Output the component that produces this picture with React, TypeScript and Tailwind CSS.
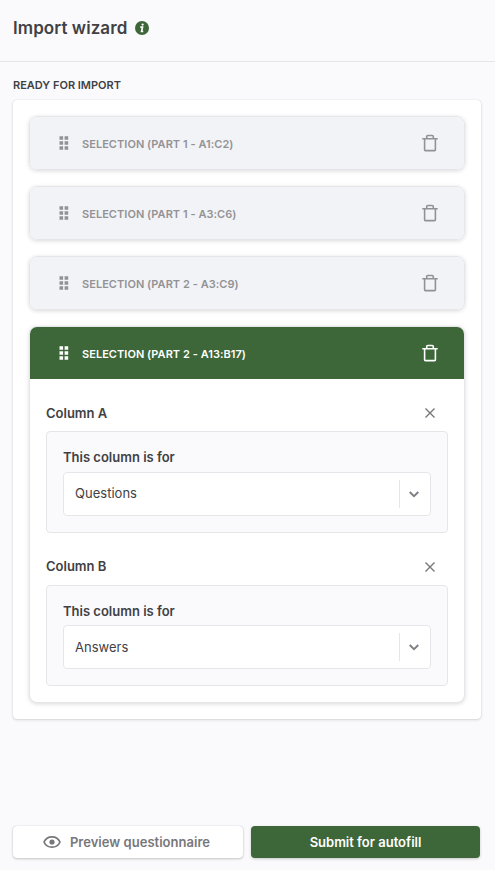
import React from "react";

function Grip() {
  return (
    <svg width="10" height="14" viewBox="0 0 10 14" fill="currentColor">
      <path d="M.5.2h3.6v3.6H.5zM5.600.2h3.600v3.600H5.600zM.5 5.200h3.600v3.600H.5zM5.600 5.200h3.600v3.600H5.600zM.5 10.200h3.600v3.600H.5zM5.600 10.200h3.600v3.600H5.600z" />
    </svg>
  );
}

function Trash() {
  return (
    <svg width="16" height="18" viewBox="0 0 16 18" fill="none" stroke="currentColor" strokeWidth="1.6">
      <path d="M.3 4.8h15.400M2.600 4.800v11q0 .8.800.8h9.200q.8 0 .8-.8v-11M4.700 4.800V2.600q0-1.100 1.100-1.100h4.400q1.100 0 1.100 1.100v2.200" />
    </svg>
  );
}

function Header({ label, active = false }: { label: string; active?: boolean }) {
  return (
    <div
      className={`flex h-[52px] items-center pl-[29px] pr-[26px] ${
        active ? "bg-[#3d6639] text-white" : "bg-[#f2f3f7] text-[#929294]"
      }`}
    >
      <Grip />
      <span className="ml-[13px] mt-[2px] flex-1 text-[11px] leading-4 font-semibold tracking-[0.04px]">{label}</span>
      <Trash />
    </div>
  );
}

function Column({ name, value, second = false }: { name: string; value: string; second?: boolean }) {
  return (
    <section>
      <div className={`flex h-5 items-center justify-between pr-3 ${second ? "mb-[9px]" : "mb-2"}`}>
        <h2 className="text-[13px] leading-5 font-semibold">{name}</h2>
        <svg
          className={second ? "mt-[2px]" : ""}
          width="12"
          height="12"
          viewBox="0 0 12 12"
          fill="none"
          stroke="#77777a"
          strokeWidth="1.4"
        >
          <path d="m1.5 1.5 9 9M10.5 1.5l-9 9" />
        </svg>
      </div>
      <div
        className={`rounded-[4px] border border-[#e6e6ea] bg-[#fafafc] px-4 pt-[15px] ${
          second ? "h-[101px]" : "h-[102px]"
        }`}
      >
        <div className={`text-[13px] leading-5 font-semibold ${second ? "mb-1" : "mb-[5px]"}`}>
          This column is for
        </div>
        <div className="flex h-11 items-center rounded-[4px] border border-[#e6e6ea] bg-white pl-[11px]">
          <span className={`flex-1 text-[13px] leading-5 tracking-[0.02px] ${second ? "" : "-mt-[2px]"}`}>{value}</span>
          <span className="h-7 w-px bg-[#e6e6ea]" />
          <span className="flex w-[30px] justify-center pr-[2px]">
            <svg width="12" height="8" viewBox="0 0 12 8" fill="none" stroke="#808084" strokeWidth="1.9">
              <path d="m1.7 2 4.3 4.2L10.3 2" />
            </svg>
          </span>
        </div>
      </div>
    </section>
  );
}

const cardClass =
  "overflow-hidden rounded-[8px] border border-[#e6e6ea] shadow-[0_1px_4px_rgba(0,0,0,0.15)]";

export default function App() {
  return (
    <div className="flex h-[870px] w-[495px] flex-col bg-[#fafafc] font-['Inter',sans-serif] text-[#414144]">
      <header className="flex h-[62px] items-center border-b border-[#e6e6ea] px-[13px] pb-[5px]">
        <h1 className="text-[17px] leading-6 font-semibold tracking-[0.07px]">Import wizard</h1>
        <svg className="ml-2" width="14" height="14" viewBox="0 0 14 14">
          <circle cx="7" cy="7" r="7" fill="#3d6639" />
          <circle cx="7.6" cy="3.6" r="1.15" fill="white" />
          <path d="M5.3 6.2h2.2L6.600 10.500h1.700" fill="none" stroke="white" strokeWidth="1.7" />
        </svg>
      </header>
      <main className="flex-1 pl-[13px] pr-[14px] pt-[15px]">
        <div className="mb-[7px] text-[11px] leading-4 font-semibold">READY FOR IMPORT</div>
        <div className="flex h-[619px] flex-col gap-4 rounded-[4px] bg-white p-4 shadow-[0_0_1px_rgba(0,0,0,0.2),0_1px_3px_rgba(0,0,0,0.14)]">
          <div className={cardClass}>
            <Header label="SELECTION (PART 1 - A1:C2)" />
          </div>
          <div className={cardClass}>
            <Header label="SELECTION (PART 1 - A3:C6)" />
          </div>
          <div className={cardClass}>
            <Header label="SELECTION (PART 2 - A3:C9)" />
          </div>
          <div className={`${cardClass} bg-white`}>
            <Header label="SELECTION (PART 2 - A13:B17)" active />
            <div className="flex flex-col gap-[23px] px-4 pt-6 pb-4">
              <Column name="Column A" value="Questions" />
              <Column name="Column B" value="Answers" second />
            </div>
          </div>
        </div>
      </main>
      <footer className="flex h-[44px] gap-2 pl-[13px] pr-[15px] text-[13px] leading-5 font-semibold">
        <button className="flex h-8 w-[230px] items-center justify-center gap-[9px] rounded-[4px] bg-white pr-[3px] tracking-[0.03px] text-[#77777a] shadow-[0_0_1px_rgba(0,0,0,0.2),0_1px_3px_rgba(0,0,0,0.2)]">
          <svg width="18" height="14" viewBox="0 0 18 14" fill="none" stroke="currentColor" strokeWidth="1.7">
            <path d="M1 7c1.500-3.400 4.300-5.200 8-5.200S15.500 3.600 17 7c-1.500 3.400-4.300 5.200-8 5.200S2.500 10.400 1 7Z" />
            <circle cx="9" cy="7" r="2.6" fill="currentColor" stroke="none" />
          </svg>
          Preview questionnaire
        </button>
        <button className="h-8 flex-1 rounded-[4px] bg-[#3d6639] text-white shadow-[0_1px_3px_rgba(0,0,0,0.2)]">
          Submit for autofill
        </button>
      </footer>
    </div>
  );
}
